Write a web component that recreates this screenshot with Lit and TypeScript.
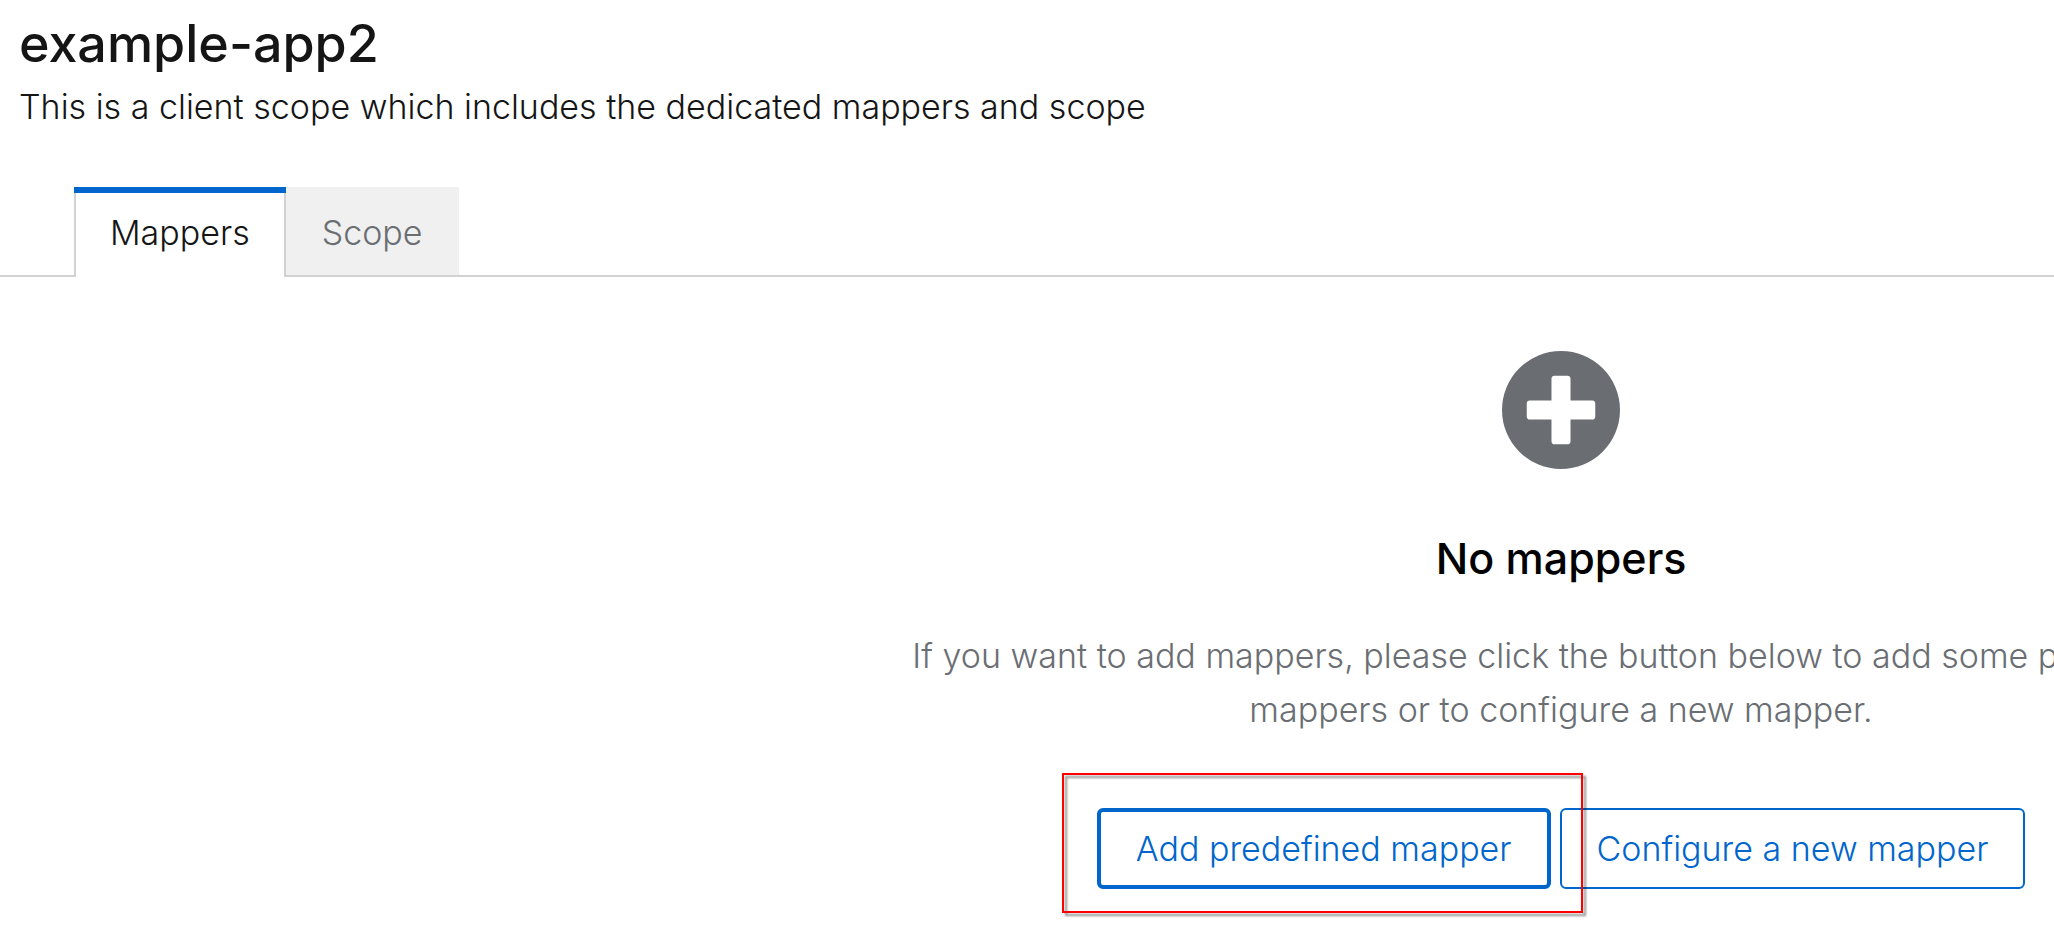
import { LitElement, html, css } from "lit";
import { customElement, state } from "lit/decorators.js";
import { classMap } from "lit/directives/class-map.js";

@customElement("app-root")
export class AppRoot extends LitElement {
  static styles = css`
    :host {
      display: block;
      min-height: 100vh;
      overflow: hidden;
      background: #fff;
      color: #151515;
      font: 300 34px/54px Inter, "Open Sans", sans-serif;
    }
    h1,
    h2,
    p {
      margin: 0;
      font-weight: inherit;
    }
    button {
      font: inherit;
      margin: 0;
      cursor: pointer;
      white-space: nowrap;
    }
    .header {
      padding: 10px 19px 53px;
      display: flex;
      flex-direction: column;
      gap: 2px;
    }
    .title {
      font-size: 52px;
      line-height: 68px;
      font-weight: 500;
    }
    .tabs {
      display: flex;
      padding-left: 74px;
      box-shadow: inset 0 -2px #d2d2d2;
    }
    .tab {
      border: 0;
      border-top: 6px solid #f0f0f0;
      padding: 13px 36px 17px;
      background: #f0f0f0;
      color: #6a6e73;
      box-shadow: inset 0 -2px #d2d2d2;
    }
    .tab.current {
      border-top-color: #06c;
      background: #fff;
      color: #151515;
      box-shadow: inset 2px 0 #d2d2d2, inset -2px 0 #d2d2d2;
    }
    .panel {
      width: 152%;
      box-sizing: border-box;
      padding: 74px 0 60px;
      display: flex;
      flex-direction: column;
      align-items: center;
      text-align: center;
    }
    .icon {
      display: block;
      width: 118px;
      height: 118px;
      fill: #6a6e73;
    }
    .heading {
      margin-top: 61px;
      color: #000;
      font-size: 43px;
      line-height: 56px;
      font-weight: 500;
    }
    .body {
      margin-top: 43px;
      max-width: 1400px;
      color: #6a6e73;
    }
    .actions {
      margin-top: 71px;
      display: flex;
      gap: 9px;
    }
    .action {
      border: 2px solid #06c;
      border-radius: 6px;
      padding: 12px 35px 11px;
      background: #fff;
      color: #06c;
    }
    .action.active {
      border-width: 4px;
      padding: 10px 35px 9px;
    }
    .marked {
      position: relative;
      display: flex;
    }
    .marker {
      position: absolute;
      z-index: 1;
      inset: -35px -32px -24px -35px;
      border: 2px solid #f00;
      filter: drop-shadow(3px 3px 1px rgba(0, 0, 0, 0.45));
      pointer-events: none;
    }
  `;

  @state() private tab = "Mappers";

  private renderTab(name: string) {
    const current = this.tab === name;
    return html`<button
      class=${classMap({ tab: true, current })}
      role="tab"
      aria-selected=${current ? "true" : "false"}
      @click=${() => (this.tab = name)}
    >${name}</button>`;
  }

  render() {
    return html`
      <header class="header">
        <h1 class="title">example-app2</h1>
        <p>This is a client scope which includes the dedicated mappers and scope</p>
      </header>
      <div class="tabs" role="tablist">${["Mappers", "Scope"].map((t) => this.renderTab(t))}</div>
      <section class="panel" role="tabpanel">
        <svg class="icon" viewBox="8 8 496 496" aria-hidden="true">
          <path
            fill-rule="evenodd"
            d="M256 8a248 248 0 1 0 0 496a248 248 0 1 0 0-496zM400 284c0 6.600-5.400 12-12 12h-92v92c0 6.600-5.400 12-12 12h-56c-6.600 0-12-5.400-12-12v-92h-92c-6.600 0-12-5.400-12-12v-56c0-6.600 5.400-12 12-12h92v-92c0-6.600 5.400-12 12-12h56c6.600 0 12 5.400 12 12v92h92c6.600 0 12 5.400 12 12z"
          />
        </svg>
        <h2 class="heading">No mappers</h2>
        <p class="body">
          If you want to add mappers, please click the button below to add some predefined mappers
          or to configure a new mapper.
        </p>
        <div class="actions">
          <div class="marked">
            <button class="action active">Add predefined mapper</button>
            <span class="marker"></span>
          </div>
          <button class="action">Configure a new mapper</button>
        </div>
      </section>
    `;
  }
}
